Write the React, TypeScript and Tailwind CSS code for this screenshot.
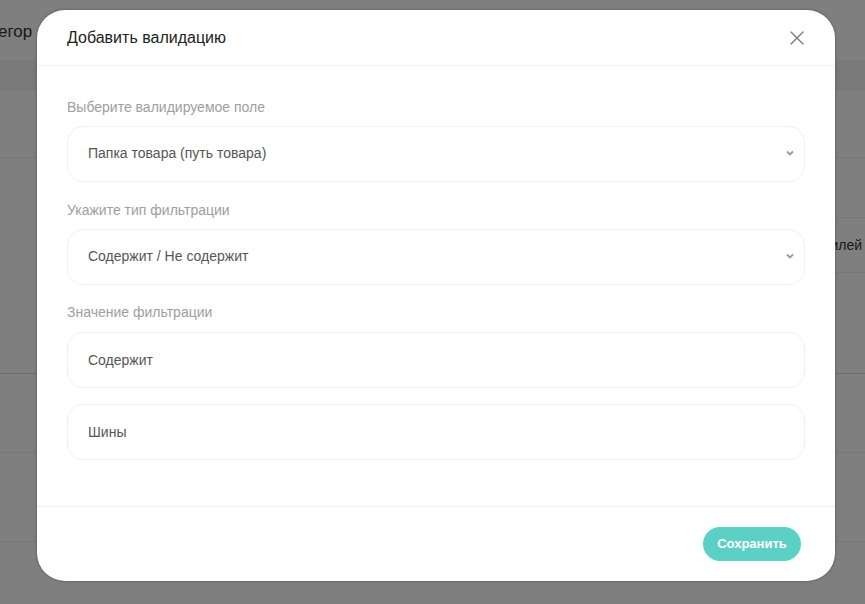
import { X } from 'lucide-react';

const font = { fontFamily: '"Liberation Sans", Arial, sans-serif' };

function Chevron() {
  return (
    <svg width="8" height="6" viewBox="0 0 8 6" className="text-[#9a9a9a]">
      <path d="M1 1.5 L4 4.5 L7 1.5" fill="none" stroke="currentColor" strokeWidth="1.8" />
    </svg>
  );
}

function SelectBox({ children }: { children: React.ReactNode }) {
  return (
    <div className="flex h-[56px] items-center justify-between rounded-[16px] border border-[#f0f0f0] pb-[2px] pl-5 pr-[10px] text-[14px] text-[#555]">
      <span>{children}</span>
      <Chevron />
    </div>
  );
}

function InputBox({ value }: { value: string }) {
  return (
    <div className="flex h-[56px] items-center rounded-[16px] border border-[#f0f0f0] pl-5 text-[14px] text-[#555]">
      {value}
    </div>
  );
}

export default function App() {
  return (
    <div className="relative h-[604px] w-[865px] overflow-hidden bg-white" style={font}>
      {/* Page behind the modal */}
      <div className="flex flex-col">
        <div className="flex h-[60px] items-center pt-1">
          <div className="w-[37px] overflow-hidden whitespace-nowrap">
            <span className="ml-[-2px] text-[17px] text-[#333]">егор</span>
          </div>
        </div>
        <div className="h-[30px] bg-[#f3f3f3]" />
        <div className="h-[68px] border-b border-[#eee]" />
        <div className="ml-[400px] h-[60px] border-b border-[#eee]" />
        <div className="ml-[400px] flex h-[55px] items-center justify-end border-b border-[#eee] pr-[3px] text-[14px] text-[#333]">
          <div className="whitespace-nowrap">илей</div>
        </div>
        <div className="h-[101px] border-b border-[#d6d6d6]" />
        <div className="h-[79px] border-b border-[#eee]" />
        <div className="h-[89px] border-b border-[#eee]" />
      </div>

      {/* Overlay */}
      <div className="absolute inset-0 bg-black/50" />

      {/* Modal */}
      <div className="absolute left-[37px] top-[10px] flex h-[571px] w-[798px] flex-col rounded-[28px] bg-white shadow-[0_0_3px_rgba(0,0,0,0.35)]">
        <div className="flex h-[56px] items-center justify-between border-b border-[#f2f2f2] pl-[30px] pr-[26px]">
          <h2 className="text-[16px] text-[#222]">Добавить валидацию</h2>
          <X className="h-[24px] w-[24px] text-[#777]" strokeWidth={1.3} />
        </div>

        <div className="flex flex-1 flex-col px-[30px] pt-[31px]">
          <label className="mb-[9px] text-[14px] leading-5 text-[#9e9e9e]">Выберите валидируемое поле</label>
          <SelectBox>Папка товара (путь товара)</SelectBox>

          <label className="mb-[9px] mt-[18px] text-[14px] leading-5 text-[#9e9e9e]">Укажите тип фильтрации</label>
          <SelectBox>Содержит / Не содержит</SelectBox>

          <label className="mb-[10px] mt-[17px] text-[14px] leading-5 text-[#9e9e9e]">Значение фильтрации</label>
          <InputBox value="Содержит" />
          <div className="h-[16px]" />
          <InputBox value="Шины" />
        </div>

        <div className="flex h-[75px] items-center justify-end border-t border-[#f2f2f2] pr-[34px]">
          <button className="h-[34px] w-[98px] rounded-full bg-[#5dd0c6] text-[13px] font-bold text-white">
            Сохранить
          </button>
        </div>
      </div>
    </div>
  );
}
